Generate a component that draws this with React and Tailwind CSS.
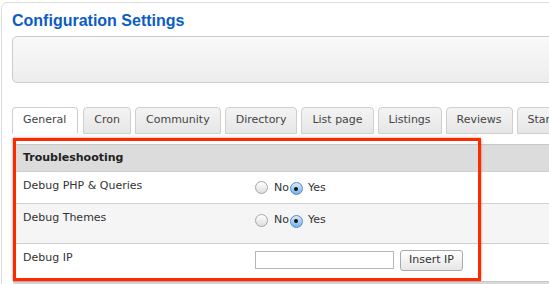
const tabs = ['General', 'Cron', 'Community', 'Directory', 'List page', 'Listings', 'Reviews', 'Starred'];

const Radio = ({ checked }) => (
  <span
    className={`inline-flex items-center justify-center w-[13px] h-[13px] rounded-full border shrink-0 ${
      checked
        ? 'border-[#5a86c0] bg-gradient-to-b from-[#d6ebfd] to-[#74b3ee]'
        : 'border-[#a5a5a5] bg-gradient-to-b from-white to-[#dedede]'
    }`}
  >
    {checked && <span className="w-[4px] h-[4px] rounded-full bg-[#111]" />}
  </span>
);

const YesNo = () => (
  <div className="flex items-center text-[11px] leading-[16px] text-[#333]">
    <Radio />
    <span className="ml-[6px]">No</span>
    <span className="ml-[1px]"><Radio checked /></span>
    <span className="ml-[5px]">Yes</span>
  </div>
);

const App = () => {
  return (
    <div className="w-[549px] h-[284px] overflow-hidden bg-white" style={{ fontFamily: '"DejaVu Sans", Verdana, sans-serif' }}>
      <div className="ml-[1px] mt-[2px] w-[620px] border border-[#dddddd] rounded-[6px] pl-[10px] pt-[9px] pb-[20px]">
        <h1 className="text-[16px] leading-[18px] font-bold text-[#0b5cc5]" style={{ fontFamily: '"Liberation Sans", Arial, sans-serif' }}>
          Configuration Settings
        </h1>
        <div className="mt-[6px] h-[47px] border border-[#cccccc] rounded-[5px] bg-gradient-to-b from-[#f9f9f9] to-[#ededed]" />

        <div className="mt-[24px] flex gap-[4px]">
          {tabs.map((t, i) => (
            <div
              key={t}
              className={`h-[27px] px-[10px] flex items-center border border-[#cfcfcf] rounded-t-[4px] text-[11px] text-[#444] whitespace-nowrap ${
                i === 0 ? 'bg-white border-b-white pr-[11px] mr-[1px]' : 'bg-gradient-to-b from-[#f4f4f4] to-[#e6e6e6]'
              }`}
            >
              {t}
            </div>
          ))}
        </div>

        <div className="relative pt-[10px]">
          <div className="ml-[1px] text-[11px] text-[#333]">
            <div className="h-[27px] bg-[#dcdcdc] border-t border-[#c8c8c8] pl-[10px] flex items-center font-bold text-[#222]">
              Troubleshooting
            </div>
            <div className="h-[32px] flex bg-white border-t border-[#d0d0d0]">
              <div className="w-[242px] pl-[10px] pt-[6px] leading-[16px]">Debug PHP &amp; Queries</div>
              <div className="flex items-center"><YesNo /></div>
            </div>
            <div className="h-[40px] flex bg-[#f5f5f5] border-t border-[#d0d0d0]">
              <div className="w-[242px] pl-[10px] pt-[6px] leading-[16px]">Debug Themes</div>
              <div className="pt-[8px]"><YesNo /></div>
            </div>
            <div className="h-[38px] flex bg-white border-t border-[#d0d0d0]">
              <div className="w-[242px] pl-[10px] pt-[6px] leading-[16px]">Debug IP</div>
              <div className="flex items-start pt-[6px]">
                <input type="text" className="mt-[1px] w-[139px] h-[18px] border border-[#b5b5b5] bg-white" />
                <button className="ml-[6px] w-[63px] h-[21px] border border-[#aaaaaa] rounded-[3px] bg-gradient-to-b from-white to-[#e6e6e6] text-[11px] text-[#333]">
                  Insert IP
                </button>
              </div>
            </div>
            <div className="h-[20px] bg-[#d8d8d8] border-t border-[#c8c8c8]" />
          </div>

          <div className="absolute left-[1px] top-[4px] w-[468px] h-[143px] border-[3px] border-[#fb2d00] shadow-[0_0_2px_rgba(160,20,0,0.6)]" />
        </div>
      </div>
    </div>
  );
};

export default App;
